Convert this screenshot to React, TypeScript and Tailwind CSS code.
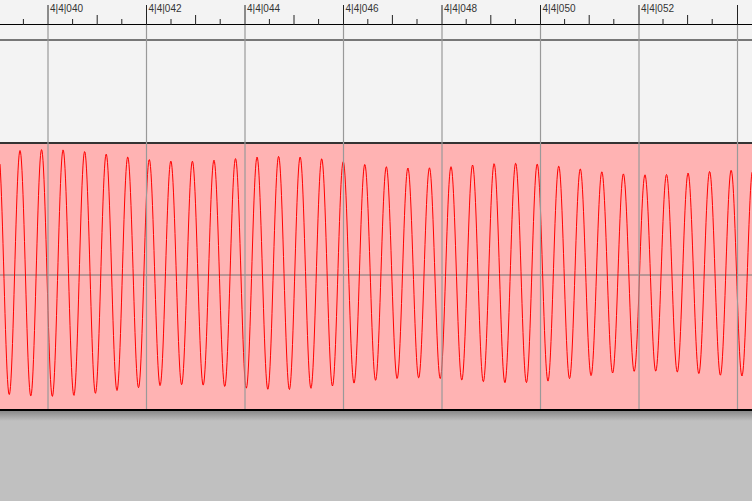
import React from "react";

const grid = [48, 146.5, 245, 343.5, 442, 540.5, 639, 737.5];
const labels = ["4|4|040", "4|4|042", "4|4|044", "4|4|046", "4|4|048", "4|4|050", "4|4|052"];

function wave() {
  let d = "";
  for (let x = 0; x <= 752; x += 0.5) {
    const amp = 121 - (x / 752) * 22 + 4 * Math.sin(x / 37);
    const y = 273 - amp * Math.cos(((x - 20) / 21.55) * 2 * Math.PI);
    d += (x === 0 ? "M" : "L") + x.toFixed(1) + " " + y.toFixed(1);
  }
  return d;
}

export default function App() {
  const ticks: { x: number; tall: boolean }[] = [];
  for (let i = -4; i < 36; i++) {
    const x = 48 + i * 24.6;
    if (i % 4 === 0) continue;
    ticks.push({ x, tall: i % 2 === 0 });
  }
  return (
    <div className="relative w-[752px] h-[501px] overflow-hidden bg-[#c0c0c0] flex flex-col" style={{ fontFamily: "'Liberation Sans', Arial, sans-serif" }}>
      <div className="relative h-[25px] bg-[#f3f3f3] border-b border-black shrink-0">
        <svg className="absolute inset-0" width="752" height="25">
          {grid.map((x) => (
            <line key={x} x1={x} x2={x} y1={5} y2={25} stroke="#222" strokeWidth="1" />
          ))}
          {ticks.map((t, i) => (
            <line key={i} x1={t.x} x2={t.x} y1={t.tall ? 15 : 19} y2={25} stroke="#222" strokeWidth="1" />
          ))}
        </svg>
        {labels.map((l, i) => (
          <span key={l} className="absolute top-[4px] text-[10px] text-[#333] leading-none" style={{ left: grid[i] + 2 }}>
            {l}
          </span>
        ))}
      </div>
      <div className="h-[16px] bg-[#f3f3f3] border-b-2 border-[#777] shrink-0" />
      <div className="h-[103px] bg-[#f3f3f3] border-b-2 border-[#333] shrink-0" />
      <div className="relative h-[267px] bg-[#ffb3b3] border-b-2 border-black shrink-0 overflow-hidden">
        <svg className="absolute left-0 top-[-144px]" width="752" height="501">
          <line x1="0" x2="752" y1="275" y2="275" stroke="#777" strokeWidth="1" />
          <path d={wave()} fill="none" stroke="#ff0000" strokeWidth="1" />
        </svg>
      </div>
      <div className="h-[10px] bg-gradient-to-b from-[#8a8a8a] to-[#c0c0c0] shrink-0" />
      <svg className="absolute left-0 top-0 pointer-events-none" width="752" height="411">
        {grid.map((x) => (
          <line key={x} x1={x} x2={x} y1={25} y2={409} stroke="#999" strokeWidth="1.2" />
        ))}
      </svg>
    </div>
  );
}
